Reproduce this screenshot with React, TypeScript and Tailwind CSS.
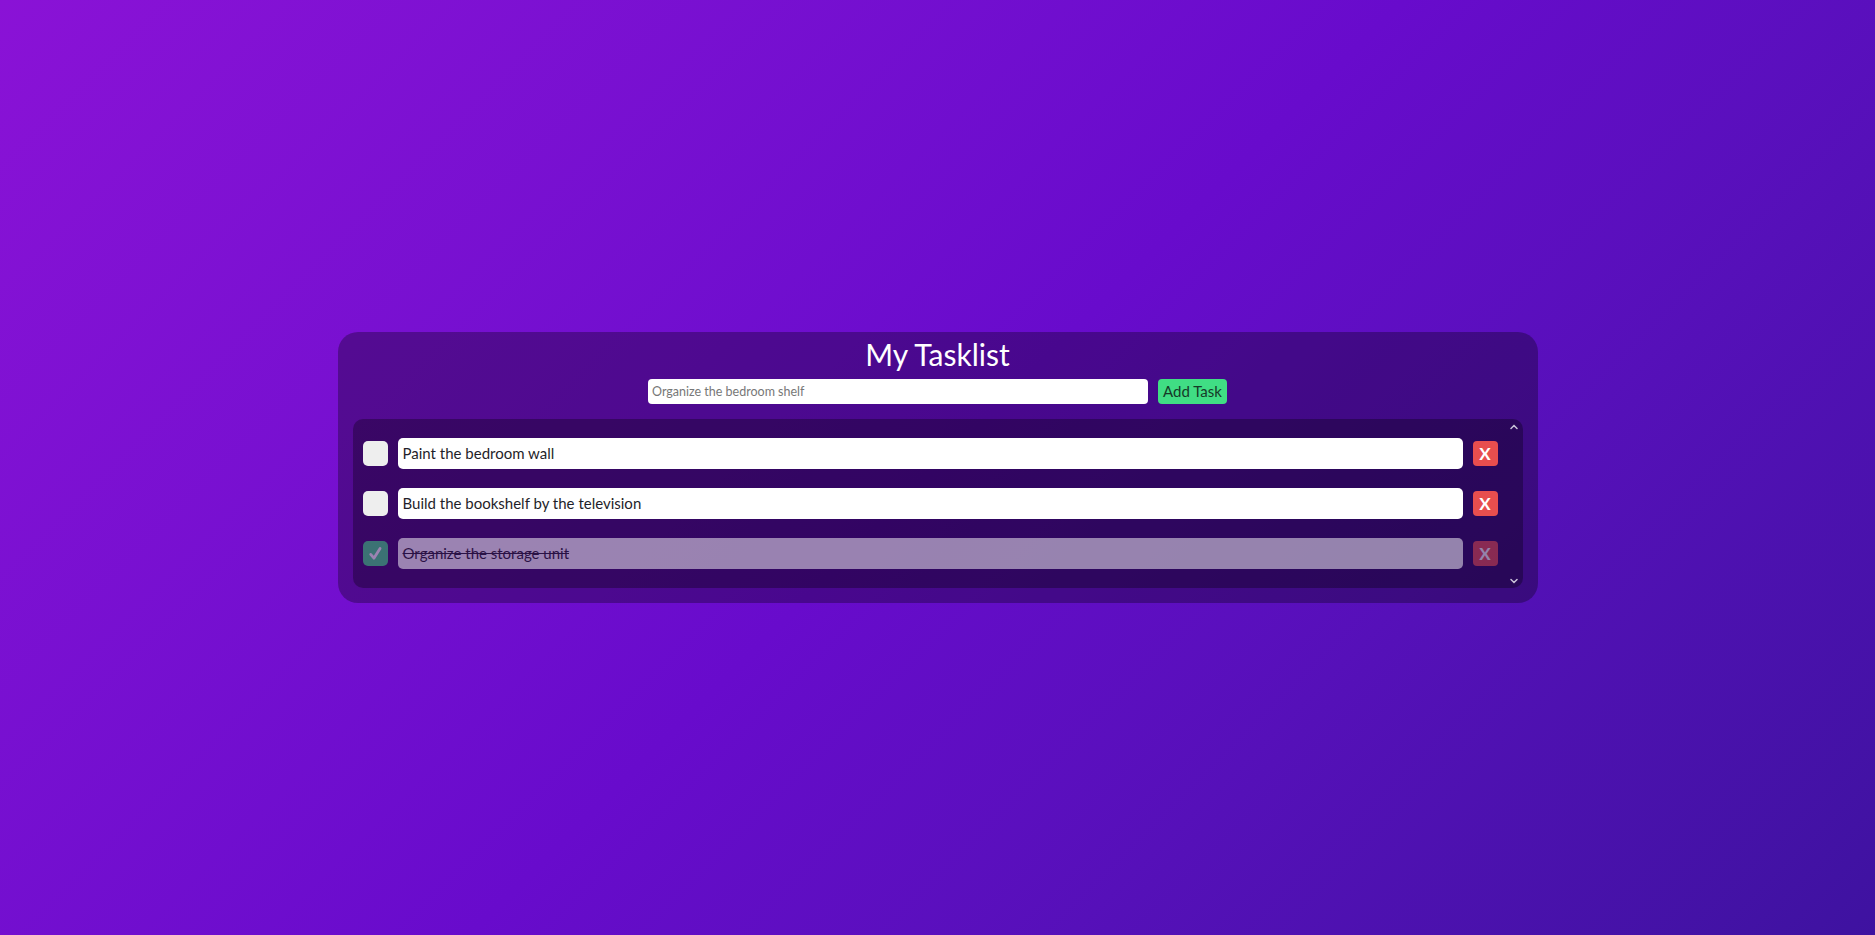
import React from "react";

type Task = { id: number; text: string; done: boolean };

const tasks: Task[] = [
  { id: 1, text: "Paint the bedroom wall", done: false },
  { id: 2, text: "Build the bookshelf by the television", done: false },
  { id: 3, text: "Organize the storage unit", done: true },
];

function TaskRow({ task }: { task: Task }) {
  return (
    <div className={`flex items-center gap-[10px] ${task.done ? "opacity-50" : ""}`}>
      <div
        className={`w-[25px] h-[25px] shrink-0 rounded-[5px] flex items-center justify-center ${
          task.done ? "bg-[#40dd84]" : "bg-[#eeeeee]"
        }`}
      >
        {task.done && (
          <svg className="w-[17px] h-[17px]" viewBox="0 0 16 16" fill="none">
            <path
              d="M3.5 8.8l3 3.6 5.8-9.2"
              stroke="white"
              strokeWidth="2.6"
              strokeLinecap="round"
              strokeLinejoin="round"
            />
          </svg>
        )}
      </div>
      <div
        className={`flex-1 h-[31px] rounded-[5px] bg-white flex items-center px-[5px] text-[15px] text-[#1f1f2a] ${
          task.done ? "line-through" : ""
        }`}
      >
        {task.text}
      </div>
      <button className="w-[25px] h-[25px] shrink-0 rounded-[4px] bg-[#e84e4e] text-white font-bold text-[17px] leading-none flex items-center justify-center">
        X
      </button>
    </div>
  );
}

export default function App() {
  return (
    <div
      className="min-h-screen w-full flex items-center justify-center bg-linear-135 from-[#8a12d6] via-[#680bcc] to-[#3e12a0]"
      style={{ fontFamily: "Lato, 'Open Sans', sans-serif" }}
    >
      <div className="w-[1200px] rounded-[20px] bg-black/30 px-[15px] pt-[2px] pb-[15px]">
        <h1 className="text-center text-white text-[30px] leading-[40px]">My Tasklist</h1>
        <div className="flex justify-center gap-[10px] mt-[5px]">
          <input
            className="w-[500px] h-[25px] rounded-[4px] bg-white px-[4px] text-[12.5px] text-[#333] outline-none placeholder:text-[#777]"
            placeholder="Organize the bedroom shelf"
          />
          <button className="w-[69px] h-[25px] rounded-[4px] bg-[#40dd84] text-[#163a28] text-[15px] leading-none">
            Add Task
          </button>
        </div>
        <div className="relative mt-[15px] rounded-[10px] bg-black/30 pl-[10px] pr-[25px] py-[19px] flex flex-col gap-[19px]">
          {tasks.map((t) => (
            <TaskRow key={t.id} task={t} />
          ))}
          <svg
            className="absolute right-[5px] top-[5px] w-[8px] h-[6px]"
            viewBox="0 0 8 6"
            fill="none"
          >
            <path d="M1 4.5L4 1.5l3 3" stroke="#c9c2d8" strokeWidth="1.5" strokeLinecap="round" />
          </svg>
          <svg
            className="absolute right-[5px] bottom-[4px] w-[8px] h-[6px]"
            viewBox="0 0 8 6"
            fill="none"
          >
            <path d="M1 1.5L4 4.5l3-3" stroke="#c9c2d8" strokeWidth="1.5" strokeLinecap="round" />
          </svg>
        </div>
      </div>
    </div>
  );
}
